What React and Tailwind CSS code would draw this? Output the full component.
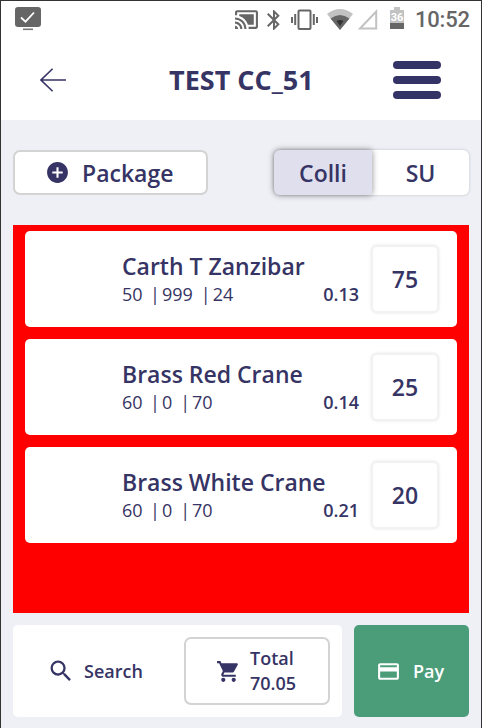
import React from "react";
import { MdAddCircle, MdBluetooth, MdCastConnected, MdCreditCard, MdSearch, MdShoppingCart } from "react-icons/md";

const items = [
  { name: "Carth T Zanzibar", indent: "pl-0", a: "50", b: "999", c: "24", weight: "0.13", qty: "75" },
  { name: "Brass Red Crane", indent: "pl-0", a: "60", b: "0", c: "70", weight: "0.14", qty: "25" },
  { name: "Brass White Crane", indent: "pl-0", a: "60", b: "0", c: "70", weight: "0.21", qty: "20" },
];

function StatusBar() {
  return (
    <div className="flex h-[38px] items-start bg-white pl-[14px] text-[#666]">
      <svg className="mt-[6px] h-6 w-[26px]" viewBox="0 0 26 24">
        <rect width="26" height="20" rx="3" fill="#666" />
        <path d="M6 10.5l4.5 4.2L19 5.5" fill="none" stroke="#fff" strokeWidth="1.8" />
        <path d="M8 22.3h10" stroke="#777" strokeWidth="1.6" />
      </svg>
      <MdCastConnected className="ml-[193px] mt-[6px] h-[25px] w-[25px]" />
      <MdBluetooth className="ml-[3px] mt-[7px] h-6 w-6" />
      <svg className="ml-[5px] mt-[8px] h-[22px] w-[27px]" viewBox="0 0 27 22" fill="none" stroke="#666">
        <rect x="7.5" y="1.5" width="12" height="18.5" rx="1" strokeWidth="2" />
        <path d="M4.2 5v11M22.8 5v11" strokeWidth="2" />
        <path d="M1 8v6M26 8v6" strokeWidth="2" />
      </svg>
      <svg className="ml-[9px] mt-[7px] h-[22px] w-[26px]" viewBox="0 0 26 22">
        <path d="M0 6Q13-4 26 6L13 22Z" fill="#c2c2c2" />
        <path d="M3.5 10.5Q13 3.5 22.5 10.5L13 22Z" fill="#666" />
        <path d="M9.5 13Q13 11 16.5 13L13 18Z" fill="#333" />
      </svg>
      <svg className="ml-[4px] mt-[8px] h-[21px] w-[21px]" viewBox="0 0 21 21">
        <path d="M19.2 2.5v17H3z" fill="none" stroke="#c2c2c2" strokeWidth="2" />
      </svg>
      <div className="ml-[12px] mt-[6px] flex flex-col items-center">
        <div className="h-[3px] w-[6px] bg-[#c2c2c2]" />
        <div className="flex h-[19px] w-[14px] justify-center bg-linear-to-b from-[#c2c2c2] from-[67%] to-[#666] to-[67%] font-['Roboto',sans-serif] text-[11px] leading-[16px] font-bold text-white">
          36
        </div>
      </div>
      <div className="ml-[11px] mt-[5px] font-['Roboto',sans-serif] text-[22px] leading-[28px] font-medium tracking-[-0.2px]">10:52</div>
    </div>
  );
}

function Header() {
  return (
    <header className="flex h-[81px] items-center bg-white pl-[39px]">
      <svg className="h-6 w-[27px]" viewBox="0 0 27 24" fill="none" stroke="#363464" strokeWidth="1.6">
        <path d="M12.6.7L1 12l11.6 11.3M1 12h25" />
      </svg>
      <h1 className="w-[250px] pl-[102px] text-[27px] leading-[36px] font-bold whitespace-nowrap">TEST CC_51</h1>
      <div className="ml-[76px] flex w-12 flex-col gap-[7px]">
        <div className="h-2 rounded-full bg-[#343366]" />
        <div className="h-2 rounded-full bg-[#343366]" />
        <div className="h-2 rounded-full bg-[#343366]" />
      </div>
    </header>
  );
}

function Controls() {
  return (
    <div className="flex justify-between px-3 pt-[30px] text-[23px] leading-[30px] font-semibold">
      <button className="flex h-[45px] w-[195px] items-center rounded-[7px] border-2 border-[#d3d3d3] bg-white pl-[30px]">
        <MdAddCircle className="h-[25px] w-[25px]" />
        <span className="ml-[12px]">Package</span>
      </button>
      <div className="flex h-[45px] w-[195px] rounded-[6px] bg-white shadow-[0_0_3px_rgba(0,0,0,0.2)]">
        <button className="w-[98px] rounded-l-[6px] rounded-r-[2px] bg-[#e0dfed] shadow-[0_0_6px_rgba(0,0,0,0.45)]">Colli</button>
        <button className="w-[97px]">SU</button>
      </div>
    </div>
  );
}

function ItemCard({ item }) {
  return (
    <div className="flex h-24 rounded-[5px] bg-white pl-[97px]">
      <div className="w-[237px] pt-[20px]">
        <div className="text-[23px] leading-[30px] font-semibold whitespace-nowrap">{item.name}</div>
        <div className="flex text-[18px] leading-[26px] font-medium">
          <span className="w-[28px]">{item.a}</span>
          <span className="mr-[2px]">|</span>
          <span>{item.b}</span>
          <span className="mr-[2px] ml-[8px]">|</span>
          <span>{item.c}</span>
          <span className="ml-auto font-semibold">{item.weight}</span>
        </div>
      </div>
      <div className="mt-[14px] ml-[12px] flex h-[68px] w-[68px] items-center justify-center rounded-[6px] border-2 border-[#f2f2f2] bg-white text-[23px] font-semibold shadow-[0_0_3px_rgba(0,0,0,0.1)]">
        {item.qty}
      </div>
    </div>
  );
}

function Footer() {
  return (
    <footer className="flex gap-3 px-3 pt-3 text-[18px] font-semibold">
      <div className="flex h-[92px] w-[329px] items-center rounded-[5px] bg-white">
        <button className="flex w-[171px] items-center pl-[34px]">
          <MdSearch className="h-7 w-7" />
          <span className="ml-[9px]">Search</span>
        </button>
        <button className="flex h-[68px] w-[146px] items-center rounded-[7px] border-2 border-[#d3d3d3] pl-[30px]">
          <MdShoppingCart className="h-[25px] w-[25px]" />
          <span className="ml-[9px] text-left leading-[25px]">
            Total
            <br />
            70.05
          </span>
        </button>
      </div>
      <button className="flex h-[92px] w-[115px] items-center rounded-[5px] bg-[#4b9d79] pl-[22px] text-white">
        <MdCreditCard className="h-[25px] w-[25px]" />
        <span className="ml-[12px]">Pay</span>
      </button>
    </footer>
  );
}

export default function App() {
  return (
    <div className="h-[728px] w-[482px] overflow-hidden border-x border-t border-[#333] bg-[#eff0f6] font-['Open_Sans',sans-serif] text-[#363464]">
      <StatusBar />
      <Header />
      <Controls />
      <main className="mx-3 mt-[30px] flex h-[388px] flex-col gap-3 bg-[#ff0000] px-3 pt-[6px]">
        {items.map((item) => (
          <ItemCard key={item.name} item={item} />
        ))}
      </main>
      <Footer />
    </div>
  );
}
